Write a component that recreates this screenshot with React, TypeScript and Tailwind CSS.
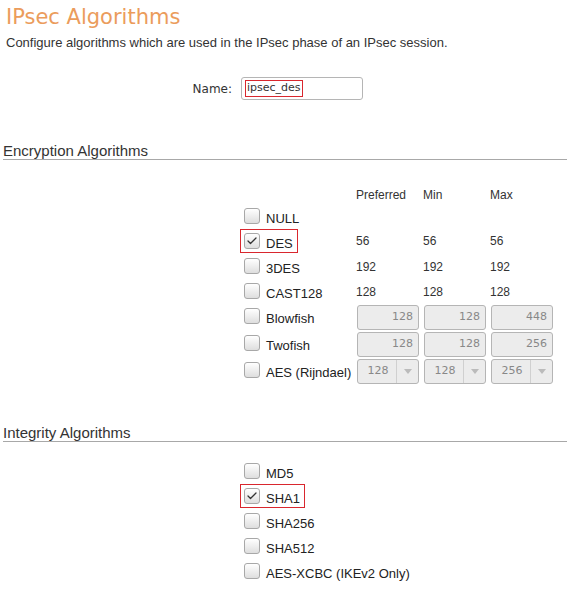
import { Check } from 'lucide-react';

const encRows = [
    { name: 'NULL', kind: 'none' },
    { name: 'DES', kind: 'text', vals: ['56', '56', '56'], checked: true },
    { name: '3DES', kind: 'text', vals: ['192', '192', '192'] },
    { name: 'CAST128', kind: 'text', vals: ['128', '128', '128'] },
    { name: 'Blowfish', kind: 'input', vals: ['128', '128', '448'] },
    { name: 'Twofish', kind: 'input', vals: ['128', '128', '256'] },
    { name: 'AES (Rijndael)', kind: 'select', vals: ['128', '128', '256'] },
];

const intRows = [
    { name: 'MD5' },
    { name: 'SHA1', checked: true },
    { name: 'SHA256' },
    { name: 'SHA512' },
    { name: 'AES-XCBC (IKEv2 Only)' },
];

function Box({ checked }: { checked?: boolean }) {
    return (
        <span className="w-[16px] h-[16px] rounded-[3px] border border-[#a8a8a8] bg-gradient-to-b from-white to-[#dedede] flex items-center justify-center shrink-0">
            {checked && <Check size={12} strokeWidth={2.5} className="text-[#333]" />}
        </span>
    );
}

function CheckLabel({ name, checked }: { name: string; checked?: boolean }) {
    return (
        <div
            className={`inline-flex items-center gap-[6px] h-[24px] pl-[3px] pr-[4px] border whitespace-nowrap ${checked ? 'border-[#d9272e]' : 'border-transparent'}`}
        >
            <Box checked={checked} />
            <span className="text-[13px] text-[#222] mt-[6px]">{name}</span>
        </div>
    );
}

function NumInput({ value }: { value: string }) {
    return (
        <div className="w-[62px] h-[25px] ml-[1px] rounded-[3px] border border-[#b5b5b5] bg-[#ececec] flex items-center justify-end pr-[5px] text-[11px] text-[#888] font-['DejaVu_Sans',sans-serif]">
            {value}
        </div>
    );
}

function NumSelect({ value }: { value: string }) {
    return (
        <div className="w-[62px] h-[25px] ml-[1px] rounded-[3px] border border-[#b5b5b5] bg-[#ececec] flex items-center text-[11px] text-[#888] font-['DejaVu_Sans',sans-serif]">
            <span className="flex-1 text-center pl-[2px]">{value}</span>
            <span className="w-[22px] h-full border-l border-[#d0d0d0] flex items-center justify-center">
                <svg width="8" height="5" viewBox="0 0 8 5"><path d="M0 0h8L4 5z" fill="#bbb" /></svg>
            </span>
        </div>
    );
}

function Section({ title }: { title: string }) {
    return (
        <div className="h-[16px] border-b border-[#a8a8a8] text-[15px] text-[#333] leading-[14px]">{title}</div>
    );
}

export default function App() {
    return (
        <div className="w-[567px] h-[594px] bg-white pl-[3px] font-['Liberation_Sans',Arial,sans-serif] text-[#333]">
            <h1 className="pl-[3px] pt-[5px] h-[34px] text-[21px] leading-[24px] text-[#eb9c5c] font-['DejaVu_Sans',sans-serif]">
                IPsec Algorithms
            </h1>
            <p className="pl-[3px] mt-[2px] text-[13px] leading-[14px] text-[#333]">
                Configure algorithms which are used in the IPsec phase of an IPsec session.
            </p>

            <div className="flex items-center mt-[27px] h-[23px]">
                <div className="w-[229px] text-right text-[12px] text-[#333] font-['DejaVu_Sans',sans-serif]">Name:</div>
                <div className="ml-[9px] w-[122px] h-[23px] rounded-[3px] border border-[#b5b5b5] bg-white flex items-center pl-[3px]">
                    <span className="border border-[#d9272e] px-[1px] h-[17px] flex items-center text-[11px] text-[#333] font-['DejaVu_Sans',sans-serif]">
                        ipsec_des
                    </span>
                </div>
            </div>

            <div className="mt-[44px]">
                <Section title="Encryption Algorithms" />
            </div>

            <div className="mt-[26px] grid grid-cols-[237px_116px_67px_67px_77px] text-[12px] text-[#333] h-[16px] items-center">
                <div />
                <div />
                <div>Preferred</div>
                <div>Min</div>
                <div>Max</div>
            </div>

            <div className="mt-[2px]">
                {encRows.map((r) => (
                    <div key={r.name} className={`grid grid-cols-[237px_116px_67px_67px_77px] items-center ${r.kind === 'input' || r.kind === 'select' ? 'h-[27px]' : 'h-[25px]'}`}>
                        <div />
                        <div><CheckLabel name={r.name} checked={r.checked} /></div>
                        {r.kind === 'text' && r.vals!.map((v, i) => (
                            <div key={i} className="text-[12px] text-[#333] mt-[-2px]">{v}</div>
                        ))}
                        {r.kind === 'input' && r.vals!.map((v, i) => <NumInput key={i} value={v} />)}
                        {r.kind === 'select' && r.vals!.map((v, i) => <NumSelect key={i} value={v} />)}
                    </div>
                ))}
            </div>

            <div className="mt-[41px]">
                <Section title="Integrity Algorithms" />
            </div>

            <div className="mt-[16px]">
                {intRows.map((r) => (
                    <div key={r.name} className="flex items-center h-[25px] pl-[237px]">
                        <CheckLabel name={r.name} checked={r.checked} />
                    </div>
                ))}
            </div>
        </div>
    );
}
